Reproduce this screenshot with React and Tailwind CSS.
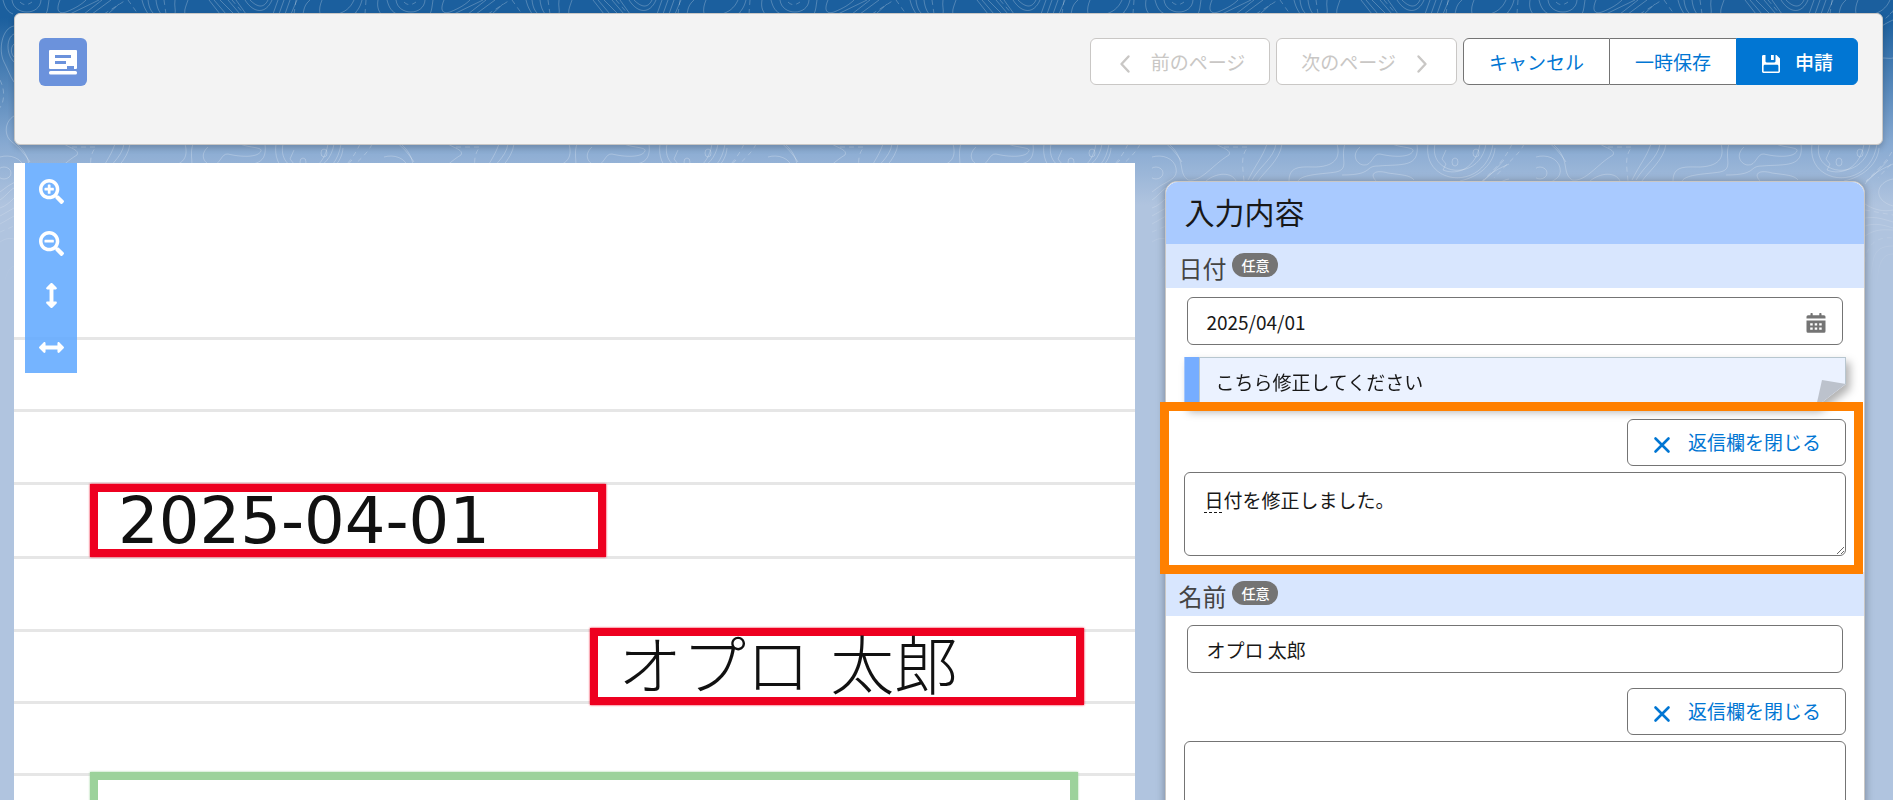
import React, { useState } from "react";
import {
  FaSearchPlus,
  FaSearchMinus,
  FaArrowsAltV,
  FaArrowsAltH,
} from "react-icons/fa";

const tools = [
  { label: "拡大", Icon: FaSearchPlus },
  { label: "縮小", Icon: FaSearchMinus },
  { label: "高さに合わせる", Icon: FaArrowsAltV },
  { label: "幅に合わせる", Icon: FaArrowsAltH },
];

function Backdrop() {
  return (
    <svg
      className="absolute inset-x-0 top-0 w-full h-[290px]"
      aria-hidden="true"
    >
      <defs>
        <linearGradient id="fade" x1="0" y1="0" x2="0" y2="1">
          <stop offset="0" stopColor="#fff" />
          <stop offset="0.6" stopColor="#fff" />
          <stop offset="1" stopColor="#000" />
        </linearGradient>
        <mask id="fadeMask">
          <rect width="100%" height="290" fill="url(#fade)" />
        </mask>
        <pattern
          id="contours"
          width="384"
          height="290"
          patternUnits="userSpaceOnUse"
        >
          <g fill="none" stroke="#fff" strokeOpacity="0.24">
            {/* top strip */}
            <path d="M12 0C14 16 40 16 41 0M3 0C5 8 8 12 13 14M49 0C48 6 48 10 46 14M60 0C55 12 60 14 66 12C76 8 82 4 86 0M70 14L99 0M84 14L102 0M92 14L111 0M108 14L119 4M142 0C144 8 146 10 148 14M148 0C149 8 151 11 154 14M156 0C157 8 159 11 161 14M175 0C174 6 176 10 175 14M188 0C186 6 184 10 185 14M209 0L220 14M214 0L226 14M220 0L234 14M228 0L240 14M236 0L246 14M245 0C254 14 266 14 272 0M250 0C258 8 264 8 268 0M278 0L273 14M284 0L279 14M290 0L285 14M297 0L291 14M310 0C304 5 304 10 303 14M322 0C320 5 319 9 320 14M354 0C350 9 344 12 338 14M362 0C360 8 357 11 354 14M378 0C377 6 378 10 381 14" />
            <path
              strokeDasharray="5 4"
              d="M20 2C24 6 28 5 32 2M104 14L126 0M128 0L138 14M164 0L166 14M232 0L244 14M294 14L296 0M366 0L365 14"
            />
            {/* left edge */}
            <path d="M14 26C2 28 -2 50 4 62S10 76 14 82M14 34C6 38 6 54 14 62M14 44C10 48 11 54 14 57M14 116C4 122 4 136 12 142S26 156 30 162M0 157C10 154 22 158 24 168S18 180 8 186L0 192M0 200C6 196 10 190 14 188M0 208C6 206 10 202 14 198M0 216L14 208M0 224L14 216M0 242C6 238 10 238 14 239M4 284C6 276 8 268 14 266" />
            <path strokeDasharray="5 4" d="M0 80C6 92 4 104 -2 110M0 232L14 226" />
            <ellipse cx="4" cy="173" rx="7" ry="6" />
            {/* strip under the header */}
            <path d="M17 144C35 160 25 172 36 180C50 182 60 165 77 155C80 150 70 148 64 144M54 181C65 172 80 172 84 181M115 144C110 158 104 164 96 180M124 144C122 158 108 166 100 180M130 144C128 160 112 172 106 181M137 181C137 165 150 167 164 167C186 166 188 155 185 144M146 181C150 174 172 174 184 172C198 169 188 158 193 144M208 147C198 156 206 165 212 165C220 166 221 153 228 154C240 157 258 158 261 151C262 147 250 148 240 144M190 175C222 175 212 166 226 166C250 164 268 168 265 144M224 181C216 172 226 170 236 173C250 175 258 175 262 180M276 144C270 186 334 192 341 144M283 144C276 176 328 182 334 144M294 150L290 159L294 164L291 170C306 176 324 168 328 144M343 148C342 162 330 176 308 181M352 160C340 174 334 178 330 182" />
            <path
              strokeDasharray="5 4"
              d="M72 147L96 147C88 156 91 168 92 181M360 144C354 158 344 168 330 181M372 144C368 154 356 162 342 178"
            />
            <ellipse cx="324" cy="153" rx="3" ry="4" />
            <ellipse cx="303" cy="162" rx="3" ry="4" />
            {/* right edge */}
            <path d="M329 42C338 30 348 24 357 20M329 72C338 52 350 60 357 58M329 110C336 122 334 134 340 142M357 179C340 182 336 200 357 206M329 184C338 172 348 168 357 164M329 204C338 210 348 212 357 210M329 218C340 216 350 220 357 222M329 226C340 222 350 226 357 228M329 236C340 228 350 230 357 230M334 280C338 262 334 246 357 246M341 286C342 268 344 254 357 254" />
            <path strokeDasharray="5 4" d="M329 210L357 215M329 262C330 246 340 236 357 238M336 30L357 12" />
          </g>
        </pattern>
      </defs>
      <rect width="100%" height="290" fill="url(#contours)" mask="url(#fadeMask)" />
    </svg>
  );
}

function Chevron({ next }) {
  return (
    <svg viewBox="0 0 20 20" className="w-5 h-5 mt-1" aria-hidden="true">
      <path
        d={next ? "M6.5 2.5L13.5 10L6.5 17.5" : "M13.5 2.5L6.5 10L13.5 17.5"}
        fill="none"
        stroke="currentColor"
        strokeWidth="2.4"
        strokeLinecap="round"
        strokeLinejoin="round"
      />
    </svg>
  );
}

function SaveIcon() {
  return (
    <svg viewBox="0 0 20 20" className="w-5 h-5 mt-1" aria-hidden="true">
      <path
        fill="currentColor"
        fillRule="evenodd"
        d="M2.5 1H4.5V7.3C4.5 8 5 8.4 5.6 8.4H13.4C14.1 8.4 14.5 8 14.5 7.3V1H15.5L19 4.4V17.6C19 18.4 18.4 19 17.6 19H2.4C1.6 19 1 18.4 1 17.6V2.4C1 1.6 1.6 1 2.5 1ZM4 10.8C3.3 10.8 2.6 11.3 2.6 12V17.4H17.4V12C17.4 11.3 16.7 10.8 16 10.8Z"
      />
      <path fill="currentColor" d="M10 1H12.8V6H10Z" />
    </svg>
  );
}

function CloseIcon() {
  return (
    <svg viewBox="0 0 20 20" className="w-5 h-5 mt-1" aria-hidden="true">
      <path
        d="M3.5 3.5L16.5 16.5M16.5 3.5L3.5 16.5"
        stroke="currentColor"
        strokeWidth="2.6"
        strokeLinecap="round"
      />
    </svg>
  );
}

function CalendarIcon() {
  return (
    <svg viewBox="0 0 20 20" className="w-5 h-5" aria-hidden="true">
      <path
        fill="currentColor"
        d="M2 2.2H4.5V1A1.1 1.1 0 0 1 6.7 1V2.2H13.3V1A1.1 1.1 0 0 1 15.5 1V2.2H18A1.5 1.5 0 0 1 19.5 3.7V5.5H.5V3.7A1.5 1.5 0 0 1 2 2.2Z"
      />
      <path
        fill="currentColor"
        fillRule="evenodd"
        d="M.5 7.5H19.5V18.2A1.5 1.5 0 0 1 18 19.7H2A1.5 1.5 0 0 1 .5 18.2ZM4.2 10.2V12.5H6.7V10.2ZM8.7 10.2V12.5H11.2V10.2ZM13.2 10.2V12.5H15.7V10.2ZM4.2 14.5V16.8H6.7V14.5ZM8.7 14.5V16.8H11.2V14.5ZM13.2 14.5V16.8H15.7V14.5Z"
      />
    </svg>
  );
}

function Header() {
  return (
    <header className="flex items-start justify-between h-[132px] p-6 bg-[#f3f3f3] border border-[#c9c7c5] rounded-md shadow-[0_3px_6px_rgba(0,0,0,0.2)]">
      <svg viewBox="0 0 48 48" className="w-12 h-12" role="img" aria-label="帳票">
        <rect width="48" height="48" rx="6" fill="#6b92dc" />
        <path
          fill="#fff"
          fillRule="evenodd"
          d="M11 12H37Q38 12 38 13V30Q38 31 37 31H35V28H28V31H11Q10 31 10 30V13Q10 12 11 12ZM16 17V20H32V17ZM16 23V26H27V23Z"
        />
        <rect x="10" y="33" width="28" height="3.5" rx="1.5" fill="#fff" />
      </svg>
      <div className="flex gap-1.5 text-[19px] leading-6 whitespace-nowrap">
        <button
          disabled
          className="flex items-center gap-4 h-[47px] px-6 bg-white border border-[#c9c7c5] rounded-md text-[#c9c7c5]"
        >
          <Chevron />
          前のページ
        </button>
        <button
          disabled
          className="flex items-center gap-4 h-[47px] px-6 bg-white border border-[#c9c7c5] rounded-md text-[#c9c7c5]"
        >
          次のページ
          <Chevron next />
        </button>
        <div className="flex">
          <button className="h-[47px] px-[25px] bg-white border border-[#747474] rounded-l-md text-[#0176d3]">
            キャンセル
          </button>
          <button className="h-[47px] px-[25px] bg-white border-y border-[#747474] text-[#0176d3]">
            一時保存
          </button>
          <button className="flex items-center gap-3.5 h-[47px] px-6 bg-[#0176d3] border border-[#0176d3] rounded-r-md text-white font-medium">
            <SaveIcon />
            申請
          </button>
        </div>
      </div>
    </header>
  );
}

function Preview() {
  return (
    <section className="relative bg-white overflow-hidden text-[64px] leading-none text-[#111111] whitespace-nowrap font-['DejaVu_Sans','Noto_Sans_CJK_JP',sans-serif]">
      <div className="h-[177px] border-b-[3px] border-[#e6e6e6]" />
      <div className="h-[72px] border-b-[3px] border-[#e6e6e6]" />
      <div className="h-[73px] border-b-[3px] border-[#e6e6e6]" />
      <div className="flex items-center h-[74px] pl-[76px] border-b-[3px] border-[#e6e6e6]">
        <div className="relative flex shrink-0 items-center w-[516px] h-[73px] pl-[20px] bg-white border-8 border-[#ee0020] shadow-[0_0_2px_#ee0020]">
          2025-04-01
        </div>
      </div>
      <div className="h-[73px] border-b-[3px] border-[#e6e6e6]" />
      <div className="flex items-center h-[72px] pl-[576px] border-b-[3px] border-[#e6e6e6]">
        <div className="relative flex shrink-0 items-center w-[494px] h-[77px] pl-[20px] bg-white border-8 border-[#ee0020] shadow-[0_0_2px_#ee0020] font-light">
          オプロ 太郎
        </div>
      </div>
      <div className="h-[72px] border-b-[3px] border-[#e6e6e6]" />
      <div className="-mt-1 ml-[76px] w-[988px] h-[80px] relative bg-white border-8 border-[#9cd29b] shadow-[0_0_2px_#9cd29b]" />

      <div className="absolute top-0 left-[11px] flex flex-col w-[52px] h-[210px] pt-0.5 bg-[#61a9ff]/87">
        {tools.map(({ label, Icon }) => (
          <button
            key={label}
            aria-label={label}
            className="flex flex-1 items-center justify-center text-[25px] text-white"
          >
            <Icon />
          </button>
        ))}
      </div>
    </section>
  );
}

function FieldTitle({ id, children }) {
  return (
    <div className="flex items-start gap-1.5 h-11 pl-3 pt-[9px] bg-[#d8e6fe]">
      <label htmlFor={id} className="text-[24px] leading-[30px] text-[#444444]">
        {children}
      </label>
      <span className="px-[9px] rounded-full bg-[#747474] text-[14px] leading-6 font-medium text-white">
        任意
      </span>
    </div>
  );
}

function Comment({ children }) {
  return (
    <div className="mx-[18px] mt-3 [filter:drop-shadow(4px_5px_4px_rgba(0,0,0,0.3))]">
      <div className="relative flex h-[50px] bg-[#ebf2ff] [clip-path:polygon(0_0,100%_0,100%_27px,calc(100%_-_30px)_100%,0_100%)]">
        <div className="w-[15px] bg-[#76adff]" />
        <p className="flex-1 pl-[15px] text-[19px] leading-[48px] border-t border-x border-[#b7c6cf]">
          {children}
        </p>
        <svg viewBox="0 0 30 27" className="absolute right-0 bottom-0 w-[30px] h-[27px]">
          <path d="M6 0L30 4L0 27Z" fill="#bcc2cc" />
        </svg>
      </div>
    </div>
  );
}

function Reply({ id, text, highlight }) {
  const [value, setValue] = useState(text);

  return (
    <div className="relative mx-[18px] pb-4">
      <div className="flex justify-end">
        <button className="flex items-center gap-4 h-[47px] px-6 bg-white border border-[#747474] rounded-md text-[19px] text-[#0176d3]">
          <CloseIcon />
          返信欄を閉じる
        </button>
      </div>
      <textarea
        id={id}
        aria-label="返信"
        value={value}
        onChange={(e) => setValue(e.target.value)}
        className="block w-full h-[84px] mt-1.5 px-[19px] py-3 bg-white border border-[#747474] rounded-md text-[19px] leading-[30px] outline-none"
      />
      {highlight && (
        <>
          <span className="absolute top-[93px] left-5 w-[18px] border-b border-dashed border-[#181818]" />
          <div className="absolute -top-[17px] -bottom-0.5 -left-6 -right-[17px] border-[9px] border-[#ff8000] pointer-events-none" />
        </>
      )}
    </div>
  );
}

function InputPanel() {
  const [date, setDate] = useState("2025/04/01");
  const [name, setName] = useState("オプロ 太郎");

  return (
    <section className="mt-[18px] ml-[30px] mr-[18px] h-[900px] bg-white border border-[#c9c7c5] rounded-xl shadow-[0_1px_8px_rgba(0,0,0,0.35)]">
      <h2 className="h-[62px] pl-[18px] bg-[#a9caff] rounded-t-xl text-[30px] leading-[58px]">
        入力内容
      </h2>

      <FieldTitle id="date">日付</FieldTitle>
      <div className="relative mx-[21px] mt-[9px]">
        <input
          id="date"
          type="text"
          value={date}
          onChange={(e) => setDate(e.target.value)}
          className="block w-full h-12 pl-[18px] pr-12 border border-[#747474] rounded-md text-[19px] outline-none"
        />
        <button
          aria-label="日付を選択"
          className="absolute right-[17px] top-4 text-[#747474]"
        >
          <CalendarIcon />
        </button>
      </div>
      <Comment>こちら修正してください</Comment>
      <div className="mt-3">
        <Reply id="date-reply" text="日付を修正しました。" highlight />
      </div>

      <FieldTitle id="name">名前</FieldTitle>
      <div className="mx-[21px] mt-[9px] mb-[15px]">
        <input
          id="name"
          type="text"
          value={name}
          onChange={(e) => setName(e.target.value)}
          className="block w-full h-12 px-[18px] border border-[#747474] rounded-md text-[19px] outline-none"
        />
      </div>
      <Reply id="name-reply" text="" />
    </section>
  );
}

function App() {
  return (
    <div className="relative h-screen overflow-hidden bg-[#b0c4df] text-[#181818] font-['Noto_Sans_CJK_JP',sans-serif]">
      <div className="absolute inset-x-0 top-0 h-[290px] bg-[linear-gradient(#1b5f9e_0px,#1b5f9e_18px,#88aad2_145px,#b0c4df_205px)]" />
      <Backdrop />
      <div className="relative flex flex-col h-full pt-[13px] pl-[14px] pr-[10px]">
        <Header />
        <main className="grid grid-cols-[3fr_2fr] flex-1 min-h-0 mt-[18px]">
          <Preview />
          <InputPanel />
        </main>
      </div>
    </div>
  );
}

export default App;
